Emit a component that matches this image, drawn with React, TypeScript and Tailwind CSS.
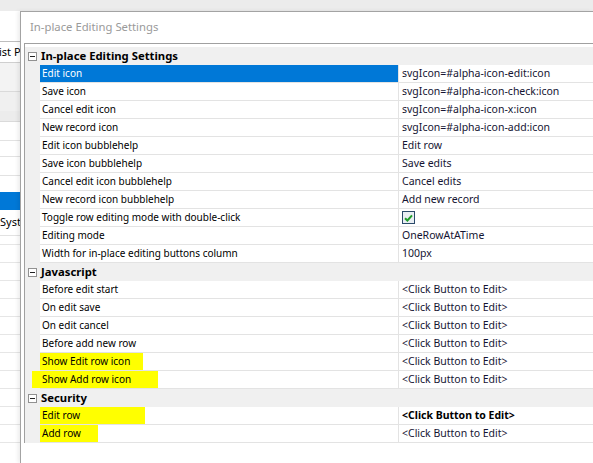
type Row = {
  name: string;
  value: string;
  selected?: boolean;
  boldValue?: boolean;
  check?: boolean;
  mark?: string;
};

type Section = { title: string; rows: Row[] };

const sections: Section[] = [
  {
    title: 'In-place Editing Settings',
    rows: [
      { name: 'Edit icon', value: 'svgIcon=#alpha-icon-edit:icon', selected: true },
      { name: 'Save icon', value: 'svgIcon=#alpha-icon-check:icon' },
      { name: 'Cancel edit icon', value: 'svgIcon=#alpha-icon-x:icon' },
      { name: 'New record icon', value: 'svgIcon=#alpha-icon-add:icon' },
      { name: 'Edit icon bubblehelp', value: 'Edit row' },
      { name: 'Save icon bubblehelp', value: 'Save edits' },
      { name: 'Cancel edit icon bubblehelp', value: 'Cancel edits' },
      { name: 'New record icon bubblehelp', value: 'Add new record' },
      { name: 'Toggle row editing mode with double-click', value: '', check: true },
      { name: 'Editing mode', value: 'OneRowAtATime' },
      { name: 'Width for in-place editing buttons column', value: '100px' },
    ],
  },
  {
    title: 'Javascript',
    rows: [
      { name: 'Before edit start', value: '<Click Button to Edit>' },
      { name: 'On edit save', value: '<Click Button to Edit>' },
      { name: 'On edit cancel', value: '<Click Button to Edit>' },
      { name: 'Before add new row', value: '<Click Button to Edit>' },
      { name: 'Show Edit row icon', value: '<Click Button to Edit>', mark: 'ml-0 w-[103px]' },
      { name: 'Show Add row icon', value: '<Click Button to Edit>', mark: '-ml-[8px] w-[126px]' },
    ],
  },
  {
    title: 'Security',
    rows: [
      { name: 'Edit row', value: '<Click Button to Edit>', boldValue: true, mark: 'ml-0 w-[105px]' },
      { name: 'Add row', value: '<Click Button to Edit>', mark: 'ml-0 w-[58px]' },
    ],
  },
];

const font = { fontFamily: '"Noto Sans", "Open Sans", sans-serif' };

function MinusBox() {
  return (
    <div className="flex h-[9px] w-[9px] items-center justify-center border border-[#919191] bg-white">
      <div className="h-px w-[5px] bg-[#222]" />
    </div>
  );
}

function CheckBox() {
  return (
    <div className="flex h-[13px] w-[13px] items-center justify-center border border-[#2b4a6a] bg-[#e9eef3]">
      <svg width="9" height="8" viewBox="0 0 9 8">
        <path d="M1 4.2 L3.4 6.5 L8 1.3" fill="none" stroke="#1f9d2a" strokeWidth="2" />
      </svg>
    </div>
  );
}

function PropRow({ row }: { row: Row }) {
  return (
    <div className="flex h-[18px]">
      <div className="w-[15px] shrink-0 bg-[#f0f0f0]" />
      <div
        className={`relative flex w-[358px] shrink-0 items-center border-b border-[#e3e3e3] pl-[2px] text-[10px] ${
          row.selected ? 'bg-[#0078d7] text-white' : 'bg-white text-black'
        }`}
      >
        {row.mark && <div className={`absolute top-0 bottom-0 left-0 bg-[#ffff00] ${row.mark}`} />}
        <span className="relative">{row.name}</span>
      </div>
      <div
        className={`flex flex-1 items-center border-b border-l border-[#e3e3e3] bg-white pl-[3px] text-[10.5px] text-[#141432] ${
          row.boldValue ? 'font-bold text-black' : ''
        }`}
      >
        {row.check ? <CheckBox /> : row.value}
      </div>
    </div>
  );
}

function SectionHeader({ title }: { title: string }) {
  return (
    <div className="flex h-[18px] items-center bg-[#f0f0f0]">
      <div className="flex w-[15px] shrink-0 justify-center">
        <MinusBox />
      </div>
      <span className="pl-[1px] text-[11.3px] font-bold text-black">{title}</span>
    </div>
  );
}

function BackWindow() {
  const lines = [247, 265, 283, 302, 320, 338, 357, 375, 392, 410, 428, 447];
  return (
    <div className="flex w-[20px] shrink-0 flex-col overflow-hidden text-[11px] text-black">
      <div className="h-[11px] bg-[#ececec]" />
      <div className="h-[31px] border-b border-[#bdbdbd] bg-white" />
      <div className="flex h-[21px] items-center border-b border-[#cfcfcf] bg-white">
        <span className="-ml-[1px] whitespace-nowrap">ist P</span>
      </div>
      <div className="h-[29px] border-b border-[#dadada] bg-[#f3f3f3]" />
      <div className="h-[19px] bg-[#f0f0f0]" />
      <div className="h-[11px] border-b border-[#dadada] bg-[#ececec]" />
      <div className="h-[19px] border-b border-[#e2e2e2] bg-white" />
      <div className="h-[16px] border-b border-[#e2e2e2] bg-white" />
      <div className="h-[19px] border-b border-[#e2e2e2] bg-white" />
      <div className="h-[16px] bg-white" />
      <div className="h-[18px] bg-[#0078d7]" />
      <div className="flex h-[26px] items-center border-b border-[#e2e2e2] bg-white">
        <span className="whitespace-nowrap">Syst</span>
      </div>
      {lines.map((y, i) => (
        <div key={y} className={`shrink-0 border-b border-[#e6e6e6] bg-white ${i === 0 ? 'h-[9px]' : 'h-[18px]'}`} />
      ))}
      <div className="flex-1 bg-white" />
    </div>
  );
}

export default function App() {
  return (
    <div className="flex h-[463px] w-[593px] overflow-hidden bg-[#ececec]" style={font}>
      <BackWindow />
      <div className="mt-[11px] flex min-w-0 flex-1 flex-col border-t border-l border-[#a3a3a3] bg-white shadow-[-2px_0_4px_rgba(0,0,0,0.08)]">
        <div className="flex h-[31px] shrink-0 items-center pl-[9px] text-[11.3px] text-[#9a9a9a]">
          In-place Editing Settings
        </div>
        <div className="flex flex-1 flex-col pl-[3px]">
          <div className="flex flex-col border-t border-l border-[#a0a0a0] pt-[3px]">
            {sections.map((s) => (
              <div key={s.title} className="flex flex-col">
                <SectionHeader title={s.title} />
                {s.rows.map((r) => (
                  <PropRow key={r.name} row={r} />
                ))}
              </div>
            ))}
          </div>
        </div>
      </div>
    </div>
  );
}
